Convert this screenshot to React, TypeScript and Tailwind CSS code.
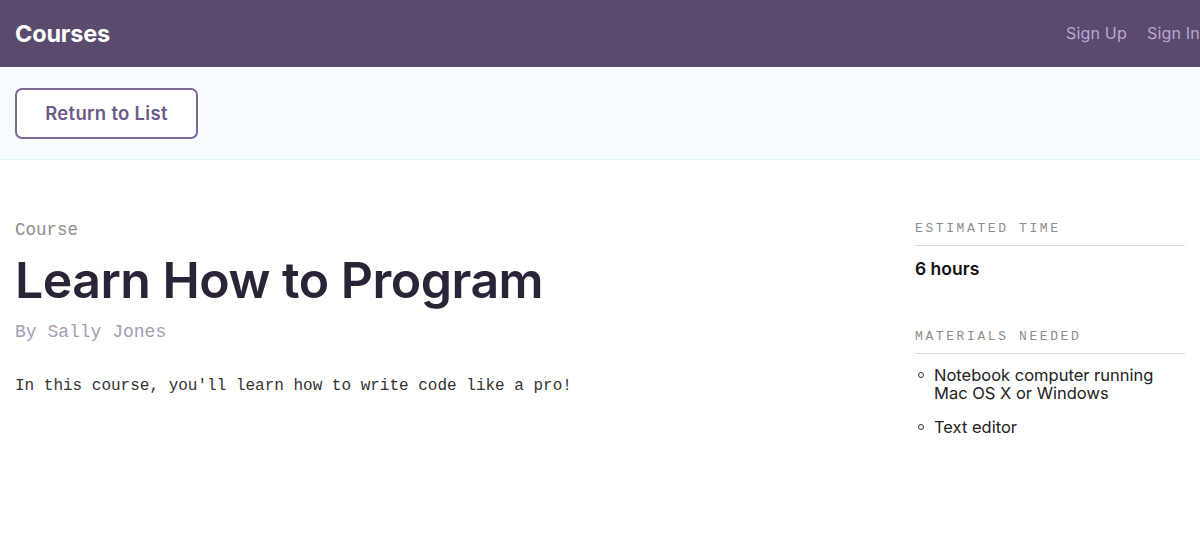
import React from "react";

export default function App() {
  return (
    <div className="min-h-[550px] bg-white font-['Inter','Noto_Sans',sans-serif]">
      <header className="h-[67px] bg-[#594a6e] flex items-center justify-between pl-[15px]">
        <h1 className="text-[23.5px] font-bold text-white tracking-[-0.2px]">Courses</h1>
        <nav className="flex items-center gap-[20px] text-[16px] text-[#b8a9cf] tracking-[0.2px] mt-[-2px]">
          <span>Sign Up</span>
          <span>Sign In</span>
        </nav>
      </header>
      <div className="h-[93px] bg-[#f7fdff] border-b border-[#e3f6fb] pl-[15px] pt-[21px]">
        <button className="w-[183px] h-[51px] border-2 border-[#7b6a97] rounded-[7px] text-[18.5px] font-semibold text-[#6b5a88] bg-white tracking-[0.3px]">
          Return to List
        </button>
      </div>
      <div className="flex px-[15px] pt-[58px]">
        <main className="flex-1">
          <div className="font-['Liberation_Mono',monospace] text-[17.5px] text-[#8e8e8e] leading-[24px]">Course</div>
          <h2 className="text-[50px] font-semibold text-[#2b2338] leading-[56px] mt-[10px] tracking-[-0.5px]">Learn How to Program</h2>
          <div className="font-['Liberation_Mono',monospace] text-[18px] text-[#a59cb3] leading-[24px] mt-[12px]">By Sally Jones</div>
          <p className="font-['Liberation_Mono',monospace] text-[16px] text-[#333] leading-[24px] mt-[30px]">
            In this course, you'll learn how to write code like a pro!
          </p>
        </main>
        <aside className="w-[270px] shrink-0">
          <div className="font-['Liberation_Mono',monospace] text-[13px] tracking-[2.6px] text-[#8c8c8c] leading-[18px] pt-[2px] pb-[7px] border-b border-[#dcdcdc]">ESTIMATED TIME</div>
          <div className="text-[17.5px] font-semibold text-[#111] mt-[11px] leading-[24px]">6 hours</div>
          <div className="font-['Liberation_Mono',monospace] text-[13px] tracking-[2.6px] text-[#8c8c8c] leading-[18px] pb-[7px] border-b border-[#dcdcdc] mt-[47px]">MATERIALS NEEDED</div>
          <ul className="mt-[12px] text-[16.5px] text-[#222] leading-[18px]">
            <li className="flex gap-[10px]">
              <span className="mt-[6px] w-[6px] h-[6px] rounded-full border border-[#333] shrink-0 ml-[3px]"></span>
              <span>Notebook computer running<br />Mac OS X or Windows</span>
            </li>
            <li className="flex gap-[10px] mt-[16px]">
              <span className="mt-[6px] w-[6px] h-[6px] rounded-full border border-[#333] shrink-0 ml-[3px]"></span>
              <span>Text editor</span>
            </li>
          </ul>
        </aside>
      </div>
    </div>
  );
}
